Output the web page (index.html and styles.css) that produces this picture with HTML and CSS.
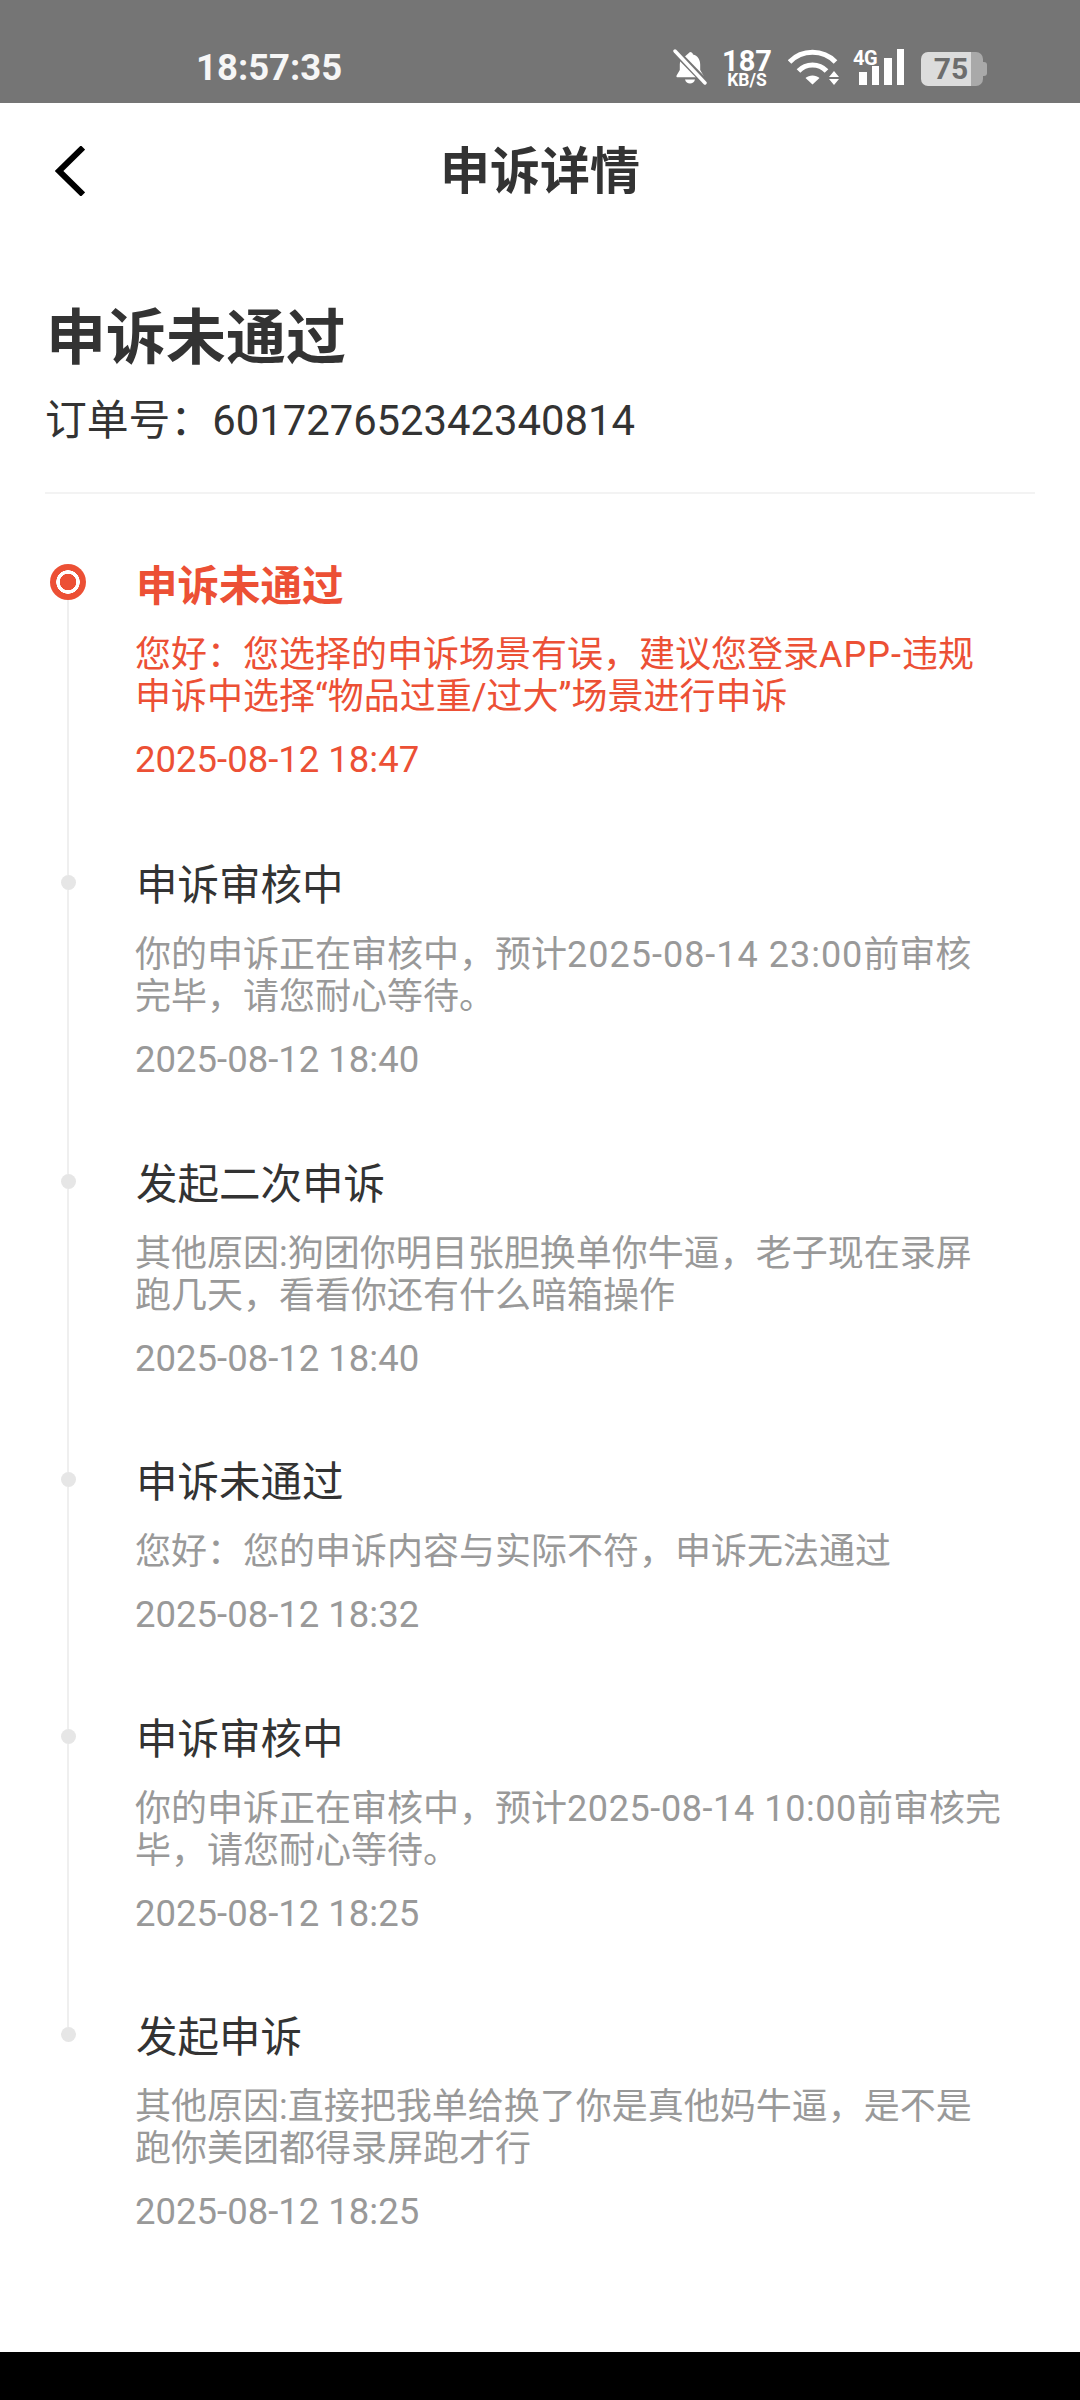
FILE: index.html
```html
<!DOCTYPE html>
<html lang="zh-CN">
<head>
<meta charset="utf-8">
<title>申诉详情</title>
<link rel="stylesheet" href="styles.css">
</head>
<body>
<div class="screen">
  <header class="status">
    <span class="time">18:57:35</span>
    <div class="status-icons">
      <svg class="bell" viewBox="0 0 34 36" width="34" height="36" aria-hidden="true">
        <path fill="#fff" d="M17 3c1.600 0 2.800 1 3 2.600 4.600 1.200 7.200 5 7.200 9.800v5.600l3.200 5.400c.5.900 0 1.800-1 1.800H4.600c-1 0-1.500-.9-1-1.800l3.200-5.400v-5.600c0-1.500.3-3 .8-4.200z"/>
        <path fill="#fff" d="M12 30.500h10c-.6 2.400-2.700 4-5 4s-4.400-1.600-5-4z"/>
        <path stroke="#757575" stroke-width="7" d="M1 1l33 34"/>
        <path stroke="#fff" stroke-width="3.400" stroke-linecap="round" d="M2 2l30 32"/>
      </svg>
      <div class="speed"><span class="speed-num">187</span><span class="speed-unit">KB/S</span></div>
      <svg class="wifi" viewBox="0 0 52 36" width="52" height="36" aria-hidden="true">
        <g fill="none" stroke="#fff" stroke-width="5">
          <path d="M1.500 13C14 0 35 0 47.500 13"/>
          <path d="M10.500 22C18 14 31 14 38.500 22"/>
        </g>
        <path fill="#fff" d="M17.500 29C21 25.500 28 25.500 31.500 29L24.500 35.500z"/>
        <path fill="#fff" d="M46 22l5 6h-10zM46 36l-5-6h10z"/>
      </svg>
      <div class="signal">
        <span class="net">4G</span>
        <svg viewBox="0 0 51 36" width="51" height="36" aria-hidden="true">
          <path fill="#fff" d="M6 23h8v13H6zM19 17h7v19h-7zM31 9h8v27h-8zM44 0h7v36h-7z"/>
        </svg>
      </div>
      <div class="battery"><span class="battery-fill"><span class="battery-num">75</span></span><span class="battery-rest"></span><span class="battery-cap"></span></div>
    </div>
  </header>

  <nav class="nav">
    <svg class="back" viewBox="0 0 30 50" width="30" height="50" aria-hidden="true">
      <path fill="none" stroke="#000" stroke-width="6" d="M28 1.500L4 25l24 23.500"/>
    </svg>
    <h1 class="nav-title">申诉详情</h1>
    <span></span>
  </nav>

  <section class="summary">
    <h2 class="summary-title">申诉未通过</h2>
    <p class="order">订单号：601727652342340814</p>
  </section>

  <main class="timeline">
    <article class="item item-current">
      <div class="rail"><span class="seg seg-top seg-none"></span><span class="dot dot-current"></span><span class="seg seg-fill"></span></div>
      <div class="content">
        <h3 class="item-title">申诉未通过</h3>
        <p class="item-body">您好：您选择的申诉场景有误，建议您登录<span class="num">APP-</span>违规<br>申诉中选择“物品过重/过大”场景进行申诉</p>
        <p class="item-time">2025-08-12 18:47</p>
      </div>
    </article>
    <article class="item">
      <div class="rail"><span class="seg seg-top"></span><span class="dot"></span><span class="seg seg-fill"></span></div>
      <div class="content">
        <h3 class="item-title">申诉审核中</h3>
        <p class="item-body">你的申诉正在审核中，预计<span class="num">2025-08-14 23:00</span>前审核<br>完毕，请您耐心等待。</p>
        <p class="item-time">2025-08-12 18:40</p>
      </div>
    </article>
    <article class="item">
      <div class="rail"><span class="seg seg-top"></span><span class="dot"></span><span class="seg seg-fill"></span></div>
      <div class="content">
        <h3 class="item-title">发起二次申诉</h3>
        <p class="item-body">其他原因:狗团你明目张胆换单你牛逼，老子现在录屏<br>跑几天，看看你还有什么暗箱操作</p>
        <p class="item-time">2025-08-12 18:40</p>
      </div>
    </article>
    <article class="item">
      <div class="rail"><span class="seg seg-top"></span><span class="dot"></span><span class="seg seg-fill"></span></div>
      <div class="content">
        <h3 class="item-title">申诉未通过</h3>
        <p class="item-body">您好：您的申诉内容与实际不符，申诉无法通过</p>
        <p class="item-time">2025-08-12 18:32</p>
      </div>
    </article>
    <article class="item">
      <div class="rail"><span class="seg seg-top"></span><span class="dot"></span><span class="seg seg-fill"></span></div>
      <div class="content">
        <h3 class="item-title">申诉审核中</h3>
        <p class="item-body">你的申诉正在审核中，预计<span class="num num-narrow">2025-08-14 10:00</span>前审核完<br>毕，请您耐心等待。</p>
        <p class="item-time">2025-08-12 18:25</p>
      </div>
    </article>
    <article class="item">
      <div class="rail"><span class="seg seg-top"></span><span class="dot"></span></div>
      <div class="content">
        <h3 class="item-title">发起申诉</h3>
        <p class="item-body">其他原因:直接把我单给换了你是真他妈牛逼，是不是<br>跑你美团都得录屏跑才行</p>
        <p class="item-time">2025-08-12 18:25</p>
      </div>
    </article>
  </main>

  <div class="bottom-bar"></div>
</div>
</body>
</html>
```

FILE: styles.css
```css
* { box-sizing: border-box; }
html, body { margin: 0; padding: 0; background: #fff; }
body { font-family: Roboto, "Noto Sans CJK SC", sans-serif; color: #333; }
h1, h2, h3, p { margin: 0; font-weight: 400; }

.screen { width: 1080px; height: 2400px; display: flex; flex-direction: column; overflow: hidden; background: #fff; }

.status { height: 103px; flex: none; background: #757575; color: #fff; display: flex; justify-content: space-between; padding: 49px 93px 0 196px; }
.time { font-size: 36.500px; line-height: 38px; font-weight: 700; color: #f6f6f6; }
.status-icons { display: flex; align-items: flex-start; height: 38px; }
.speed { margin-left: 18px; width: 44px; display: flex; flex-direction: column; align-items: center; font-weight: 700; }
.speed-num { font-size: 29px; line-height: 24px; height: 24px; }
.speed-unit { font-size: 17.500px; line-height: 14px; height: 14px; white-space: nowrap; }
.wifi { margin-left: 19px; }
.signal { margin-left: 13px; width: 51px; height: 36px; display: flex; align-items: flex-start; }
.net { font-size: 20px; line-height: 18px; font-weight: 700; width: 0; white-space: nowrap; letter-spacing: -.5px; }
.battery { margin-left: 17px; margin-top: 3px; height: 34px; display: flex; align-items: center; }
.battery-fill { width: 50px; height: 34px; background: #dcdcdc; border-radius: 7px 0 0 7px; display: flex; align-items: center; justify-content: center; padding-left: 10px; }
.battery-num { font-size: 30px; font-weight: 700; color: #6d6d6d; line-height: 34px; }
.battery-rest { width: 12px; height: 34px; background: #a9a9a9; border-radius: 0 7px 7px 0; }
.battery-cap { width: 4px; height: 14px; background: #a9a9a9; border-radius: 0 3px 3px 0; }

.nav { height: 136px; flex: none; display: grid; grid-template-columns: 1fr auto 1fr; align-items: center; padding-left: 55px; }
.back { display: block; }
.nav-title { font-size: 50px; line-height: 60px; font-weight: 700; color: #333; padding: 2px 55px 0 0; }

.summary { margin: 65px 45px 0; padding-bottom: 43px; border-bottom: 2px solid #f3f3f3; }
.summary-title { font-size: 60px; line-height: 70px; font-weight: 700; color: #333; padding-left: 1px; }
.order { margin-top: 19px; font-size: 41.800px; line-height: 56px; color: #333; }

.timeline { flex: 1; margin-top: 63px; padding-left: 45px; }
.item { display: flex; }
.rail { width: 46px; flex: none; margin-right: 44px; display: flex; flex-direction: column; align-items: center; }
.seg { width: 2px; background: #efefef; display: block; }
.seg-top { height: 18px; flex: none; }
.seg-none { height: 7px; background: transparent; }
.seg-fill { flex: 1; }
.dot { width: 15px; height: 15px; flex: none; border-radius: 50%; background: #e6e6e6; }
.dot-current { width: 36px; height: 36px; background: radial-gradient(circle, #ec5035 0 8px, #fff 8.500px 11.500px, #ec5035 12px 18px); }

.content { flex: 1; padding-bottom: 70.500px; }
.item-title { font-size: 41.500px; line-height: 56px; color: #333; padding: 1px 0 0 1px; }
.item-body { margin-top: 20px; font-size: 36px; line-height: 42px; color: #999; }
.num { letter-spacing: 1px; }
.num-narrow { letter-spacing: .6px; }
.item-time { margin-top: 17px; font-size: 36.500px; line-height: 50px; color: #999; }

.item-current .item-title { font-weight: 700; color: #ec5035; padding-top: 2px; }
.item-current .item-body { margin-top: 19px; }
.item-current .item-body, .item-current .item-time { color: #ec5035; }
.item-current .content { padding-bottom: 72px; }

.bottom-bar { height: 48px; flex: none; background: #000; }
```
